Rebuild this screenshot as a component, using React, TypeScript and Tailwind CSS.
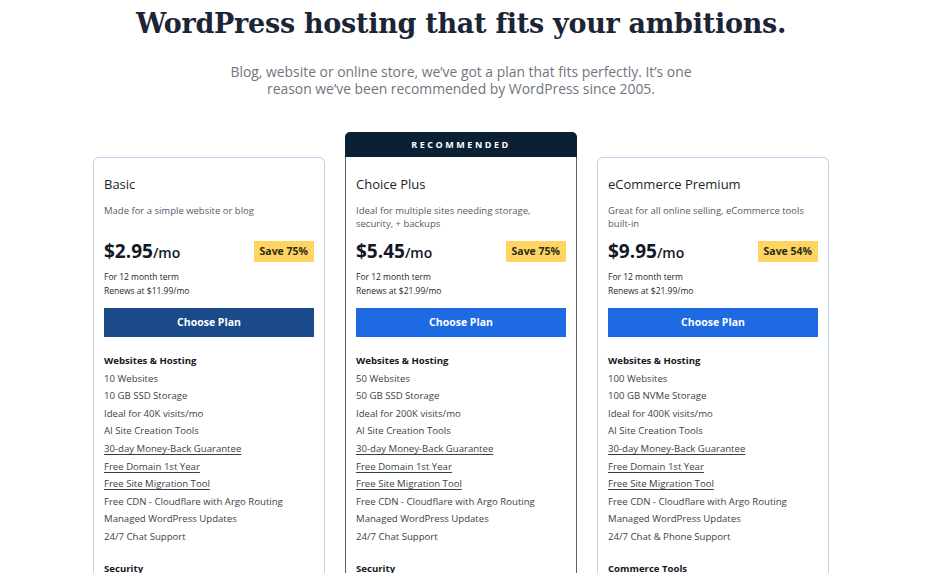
import React from 'react';

type Feature = { label: string; link?: boolean };

type Plan = {
  name: string;
  blurb: string;
  price: string;
  save: string;
  renews: string;
  recommended?: boolean;
  dark?: boolean;
  features: Feature[];
  next: string;
};

const common = (sites: string, storage: string, visits: string, support: string): Feature[] => [
  { label: sites },
  { label: storage },
  { label: visits },
  { label: 'AI Site Creation Tools' },
  { label: '30-day Money-Back Guarantee', link: true },
  { label: 'Free Domain 1st Year', link: true },
  { label: 'Free Site Migration Tool', link: true },
  { label: 'Free CDN - Cloudflare with Argo Routing' },
  { label: 'Managed WordPress Updates' },
  { label: support },
];

const PLANS: Plan[] = [
  {
    name: 'Basic',
    blurb: 'Made for a simple website or blog',
    price: '$2.95',
    save: 'Save 75%',
    renews: 'Renews at $11.99/mo',
    dark: true,
    features: common('10 Websites', '10 GB SSD Storage', 'Ideal for 40K visits/mo', '24/7 Chat Support'),
    next: 'Security',
  },
  {
    name: 'Choice Plus',
    blurb: 'Ideal for multiple sites needing storage, security, + backups',
    price: '$5.45',
    save: 'Save 75%',
    renews: 'Renews at $21.99/mo',
    recommended: true,
    features: common('50 Websites', '50 GB SSD Storage', 'Ideal for 200K visits/mo', '24/7 Chat Support'),
    next: 'Security',
  },
  {
    name: 'eCommerce Premium',
    blurb: 'Great for all online selling, eCommerce tools built-in',
    price: '$9.95',
    save: 'Save 54%',
    renews: 'Renews at $21.99/mo',
    features: common('100 Websites', '100 GB NVMe Storage', 'Ideal for 400K visits/mo', '24/7 Chat & Phone Support'),
    next: 'Commerce Tools',
  },
];

function PlanCard({ plan }: { plan: Plan }) {
  return (
    <div className={plan.recommended ? 'flex flex-col' : 'flex flex-col pt-[25px]'}>
      {plan.recommended && (
        <div className="h-[25px] rounded-t-[5px] bg-[#0b1f35] flex items-center justify-center pt-[1px] text-[9px] font-bold tracking-[0.28em] text-white">
          RECOMMENDED
        </div>
      )}
      <div
        className={
          plan.recommended
            ? 'border border-t-0 border-[#5b6370] bg-white px-[10px] pt-[19px] pb-6 h-[440px]'
            : 'border border-[#bcd3ee] rounded-[6px] bg-white px-[10px] pt-[18px] pb-6 h-[440px]'
        }
      >
        <h3 className="text-[13px] leading-[16px] font-medium text-[#1a1f2b]">{plan.name}</h3>
        <p className="mt-[12px] h-[26px] text-[9.5px] leading-[13px] text-[#555b66]">{plan.blurb}</p>
        <div className="mt-[11px] flex items-center justify-between h-[21px]">
          <div className="text-[#111827] font-bold">
            <span className="text-[19px]">{plan.price}</span>
            <span className="text-[14px] font-semibold">/mo</span>
          </div>
          <span className="bg-[#fdd560] text-[#2e2a1a] text-[10.5px] font-bold h-[21px] px-[6px] flex items-center">
            {plan.save}
          </span>
        </div>
        <div className="mt-[8px] text-[8.5px] leading-[14px] text-[#1f2430]">
          <div>For 12 month term</div>
          <div>{plan.renews}</div>
        </div>
        <button
          className={
            plan.dark
              ? 'mt-[10px] w-full h-[29px] bg-[#1b4a8a] text-white text-[10.5px] font-bold'
              : 'mt-[10px] w-full h-[29px] bg-[#1d6ae3] text-white text-[10.5px] font-bold'
          }
        >
          Choose Plan
        </button>
        <div className="mt-[15px] text-[9.6px] leading-[17.6px] text-[#3b3f47]">
          <div className="font-bold text-[#15181e]">Websites &amp; Hosting</div>
          {plan.features.map((f) => (
            <div key={f.label} className={f.link ? 'underline underline-offset-2' : ''}>
              {f.label}
            </div>
          ))}
          <div className="mt-[14px] font-bold text-[#15181e]">{plan.next}</div>
        </div>
      </div>
    </div>
  );
}

export default function App() {
  return (
    <div className="w-[950px] h-[573px] overflow-hidden bg-white pr-[28px] font-['Open_Sans',sans-serif]">
      <div className="pt-[6px] text-center">
        <h1 className="font-['DejaVu_Serif',serif] text-[27px] leading-[36px] font-bold tracking-[-0.01em] text-[#1c2536]">
          WordPress hosting that fits your ambitions.
        </h1>
        <p className="mx-auto mt-[21px] w-[490px] text-[13.9px] leading-[17px] text-[#70757e]">
          Blog, website or online store, we’ve got a plan that fits perfectly. It’s one reason we’ve been
          recommended by WordPress since 2005.
        </p>
      </div>
      <div className="mx-auto mt-[35px] w-[736px] grid grid-cols-3 gap-[20px]">
        {PLANS.map((p) => (
          <PlanCard key={p.name} plan={p} />
        ))}
      </div>
    </div>
  );
}
